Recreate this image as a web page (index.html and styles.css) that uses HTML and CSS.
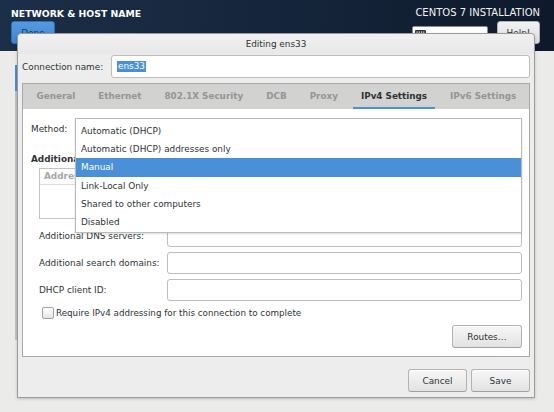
FILE: index.html
```html
<!DOCTYPE html>
<html>
<head>
<meta charset="utf-8">
<link rel="stylesheet" href="styles.css">
</head>
<body>
<div class="screen">
  <header class="topbar">
    <div class="tb-left">
      <div class="spoke-title">NETWORK &amp; HOST NAME</div>
      <button class="done-btn">Done</button>
    </div>
    <div class="tb-right">
      <div class="product">CENTOS 7 INSTALLATION</div>
      <div class="tb-controls">
        <div class="kbd-entry">
          <svg class="kbd-icon" width="11" height="7" viewBox="0 0 11 7"><rect x="0" y="0" width="11" height="7" rx="1" fill="#2e3436"/><rect x="1.5" y="1.5" width="1.2" height="1.2" fill="#fff"/><rect x="3.7" y="1.5" width="1.2" height="1.2" fill="#fff"/><rect x="5.9" y="1.5" width="1.2" height="1.2" fill="#fff"/><rect x="8.1" y="1.5" width="1.2" height="1.2" fill="#fff"/></svg>
        </div>
        <button class="help-btn">Help!</button>
      </div>
    </div>
  </header>
  <main class="spoke">
    <div class="edge-sel"></div>
    <div class="edge-rest"></div>
  </main>

  <div class="dialog">
    <div class="dlg-title">Editing ens33</div>
    <div class="dlg-body">
      <div class="conn-row">
        <span class="conn-label">Connection name:</span>
        <div class="entry conn-entry"><span class="sel">ens33</span></div>
      </div>
      <div class="notebook">
        <div class="tabs">
          <div class="tab">General</div>
          <div class="tab">Ethernet</div>
          <div class="tab">802.1X Security</div>
          <div class="tab">DCB</div>
          <div class="tab">Proxy</div>
          <div class="tab active">IPv4 Settings</div>
          <div class="tab">IPv6 Settings</div>
        </div>
        <div class="page">
          <div class="method-row">
            <span class="method-lbl">Method:</span>
            <div class="combo">
              <div class="combo-face"></div>
              <ul class="menu">
                <li class="item">Automatic (DHCP)</li>
                <li class="item">Automatic (DHCP) addresses only</li>
                <li class="item hl">Manual</li>
                <li class="item">Link-Local Only</li>
                <li class="item">Shared to other computers</li>
                <li class="item">Disabled</li>
              </ul>
            </div>
          </div>
          <div class="section-title">Additional static addresses</div>
          <div class="indent">
            <div class="addr-box">
              <div class="addr-head"><span class="col">Address</span><span class="col">Netmask</span><span class="col">Gateway</span></div>
            </div>
            <div class="form-row first"><span class="lbl">Additional DNS servers:</span><div class="entry"></div></div>
            <div class="form-row"><span class="lbl">Additional search domains:</span><div class="entry"></div></div>
            <div class="form-row"><span class="lbl">DHCP client ID:</span><div class="entry"></div></div>
            <div class="check-row"><span class="check"></span><span class="check-text">Require IPv4 addressing for this connection to complete</span></div>
          </div>
          <div class="routes-row"><button class="btn routes">Routes…</button></div>
        </div>
      </div>
      <div class="actions">
        <button class="btn cancel">Cancel</button>
        <button class="btn save">Save</button>
      </div>
    </div>
  </div>
</div>
</body>
</html>
```

FILE: styles.css
```css
* { box-sizing: border-box; }
html, body { margin: 0; padding: 0; }
body {
  width: 554px;
  height: 412px;
  overflow: hidden;
  background: #ebebea;
  font-family: "DejaVu Sans", sans-serif;
  font-size: 8.9px;
  color: #2e3436;
}
button { font-family: inherit; font-size: inherit; margin: 0; padding: 0; }
.screen { position: relative; width: 554px; height: 412px; }

/* top bar */
.topbar {
  height: 51px;
  background: linear-gradient(90deg, #1c2f48 0%, #15253b 50%, #0e1a2b 100%);
  display: flex;
  justify-content: space-between;
  padding: 0 14px 0 11px;
}
.tb-left { padding-top: 8px; }
.spoke-title { font-weight: bold; font-size: 9.3px; line-height: 11px; color: #fff; }
.done-btn {
  display: block;
  margin-top: 2px;
  width: 44px;
  height: 23px;
  border: 1px solid #2f6fb5;
  border-radius: 3px;
  background: linear-gradient(#5499e0, #3f86d2);
  color: #1e3857;
  font-size: 8.9px;
}
.tb-right { padding-top: 7px; display: flex; flex-direction: column; align-items: flex-end; }
.product { font-size: 10px; line-height: 12px; color: #f2f2f2; }
.tb-controls { display: flex; gap: 9px; margin-top: 2px; align-items: flex-start; }
.kbd-entry {
  margin-top: 5px;
  width: 76px;
  height: 22px;
  background: #fff;
  border: 1px solid #8d8d8d;
  border-radius: 2px;
  padding: 3px 0 0 2px;
}
.kbd-icon { display: block; }
.help-btn {
  width: 43px;
  height: 23px;
  border: 1px solid #b0b0b0;
  border-radius: 3px;
  background: linear-gradient(#f2f2f2, #dedede);
  color: #2e3436;
}

/* hidden spoke content */
.spoke { padding: 14px 0 0 15px; }
.edge-sel { width: 2px; height: 26px; background: #4a90d9; }
.edge-rest { width: 2px; height: 249px; background: #c4c4c4; }

/* dialog */
.dialog {
  position: absolute;
  left: 17px;
  top: 33px;
  width: 518px;
  height: 365px;
  background: #ededed;
  border: 1px solid #9b9b9b;
  border-radius: 4px 4px 0 0;
  box-shadow: 0 1px 3px rgba(0,0,0,0.2);
}
.dlg-title {
  height: 20px;
  line-height: 20px;
  text-align: center;
  background: linear-gradient(#f0f0f0, #e8e8e8);
  border-radius: 4px 4px 0 0;
}
.dlg-body { padding: 1px 4px 0; }

.conn-row { display: flex; align-items: center; height: 23px; }
.conn-label { width: 89px; }
.entry {
  flex: 1;
  height: 22px;
  background: #fff;
  border: 1px solid #bdbdbd;
  border-radius: 3px;
  display: flex;
  align-items: center;
}
.conn-entry { height: 23px; padding-left: 5px; }
.sel { background: #4a90d9; color: #fff; line-height: 11px; padding: 0 1px; }

.notebook {
  margin-top: 5px;
  height: 274px;
  border: 1px solid #a9a9a9;
  display: flex;
  flex-direction: column;
}
.tabs {
  display: flex;
  height: 25px;
  padding-left: 2px;
  background: #d2d2d0;
}
.tab {
  display: flex;
  align-items: center;
  padding: 0 8px;
  margin: 0 3.5px;
  font-weight: bold;
  font-size: 8.8px;
  color: #939696;
  border-bottom: 2px solid transparent;
}
.tab.active { color: #2e3436; border-bottom-color: #4a90d9; }

.page {
  position: relative;
  flex: 1;
  background: #fff;
  padding: 9px 7px 0 8px;
}
.method-row { display: flex; align-items: center; height: 22px; }
.method-lbl { width: 44px; }
.combo { position: relative; flex: 1; height: 22px; }
.combo-face {
  height: 22px;
  border: 1px solid #b6b6b3;
  border-radius: 3px;
  background: linear-gradient(#f6f6f6, #e3e3e3);
}
.menu {
  position: absolute;
  top: 0;
  left: 0;
  right: 0;
  margin: 0;
  padding: 2.5px 0 0;
  list-style: none;
  background: #fff;
  border: 1px solid #bababa;
  box-shadow: 0 1px 2px rgba(0,0,0,0.15);
  z-index: 5;
}
.item { height: 18.4px; line-height: 18.4px; padding-left: 5px; }
.item.hl { background: #4a90d9; color: #fff; }

.section-title { margin-top: 13px; line-height: 12px; font-weight: bold; }
.indent { padding-left: 8px; }
.addr-box {
  margin-top: 3px;
  height: 51px;
  border: 1px solid #c3c3c3;
  background: #fff;
}
.addr-head {
  height: 16px;
  border-bottom: 1px solid #dddddd;
  display: flex;
  padding-left: 4px;
  line-height: 15px;
  font-weight: bold;
  color: #a6a6a6;
}
.col { width: 140px; }
.form-row { display: flex; align-items: center; height: 22px; margin-top: 5px; }
.form-row.first { margin-top: 6px; }
.lbl { width: 128px; }
.check-row { display: flex; align-items: center; height: 16px; margin-top: 4px; }
.check {
  width: 12px;
  height: 12px;
  margin: 0 2.5px 0 2.5px;
  border: 1px solid #a2a2a2;
  border-radius: 2px;
  background: linear-gradient(#ffffff, #e4e4e4);
}
.check-text { font-size: 8.75px; }
.routes-row { display: flex; justify-content: flex-end; margin-top: 4px; }

.btn {
  height: 23px;
  border: 1px solid #b3b3b1;
  border-bottom-color: #9f9f9d;
  border-radius: 3px;
  background: linear-gradient(#f7f7f7, #e2e2e2);
  color: #2e3436;
  box-shadow: inset 0 1px #fff;
}
.routes { width: 70px; }
.actions { display: flex; justify-content: flex-end; gap: 4px; margin-top: 12px; }
.cancel { width: 59px; }
.save { width: 59px; }
```
